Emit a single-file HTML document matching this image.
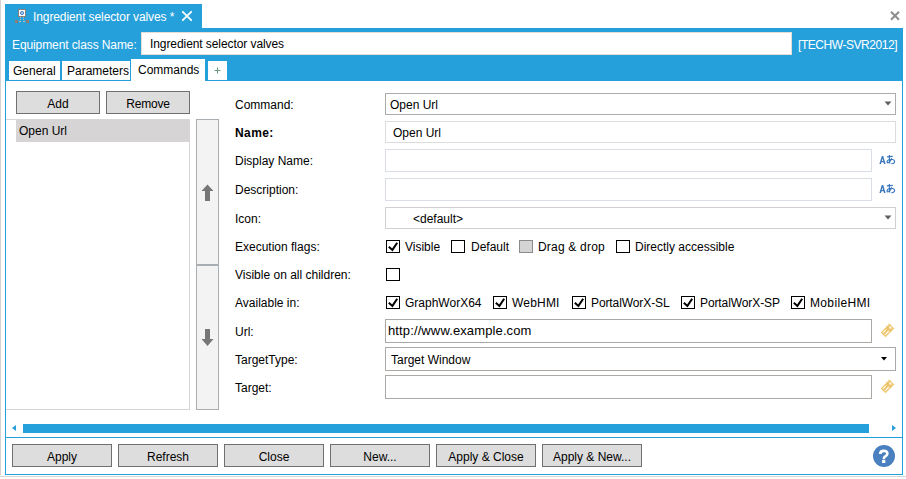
<!DOCTYPE html>
<html><head><meta charset="utf-8">
<style>
*{margin:0;padding:0;box-sizing:border-box}
html,body{width:906px;height:479px;overflow:hidden;background:#fff}
body{position:relative;font-family:"Liberation Sans",sans-serif;font-size:12px;color:#000}
.a{position:absolute}
.t{position:absolute;font-size:12px;line-height:14px;white-space:nowrap}
.blue{background:#26a0da}
.btn{position:absolute;background:#dddddd;border:1px solid #707070;height:23px;text-align:center;line-height:24px}
.cb{position:absolute;width:14px;height:13px;border:1px solid #000;background:#fff}
.cb svg{position:absolute;left:0;top:0}
.box{position:absolute;background:#fff;border:1px solid #d9dde6}
</style></head>
<body>
<!-- left window edge -->
<div class="a" style="left:0;top:476px;width:906px;height:1px;background:#d6d6d6"></div>
<div class="a" style="left:0;top:0;width:1px;height:475px;background:#d2d2d2"></div>

<!-- title tab -->
<div class="a blue" style="left:5px;top:4px;width:197px;height:24px"></div>
<svg class="a" style="left:14px;top:8px" width="16" height="16" viewBox="0 0 16 16">
  <rect x="4.5" y="1.5" width="7" height="7" fill="#fff" stroke="#8a7e7a"/>
  <circle cx="8" cy="5" r="1.6" fill="#a9c3e6" stroke="#4f86c6" stroke-width="1"/>
  <rect x="6" y="9" width="1" height="1" fill="#c9c0b0"/><rect x="9" y="9" width="1" height="1" fill="#c9c0b0"/>
  <rect x="6" y="11" width="1" height="1" fill="#c9c0b0"/><rect x="9" y="11" width="1" height="1" fill="#c9c0b0"/>
  <rect x="1" y="12" width="3" height="3" fill="#8a7e7a"/><rect x="12" y="12" width="3" height="3" fill="#8a7e7a"/>
  <rect x="5" y="13" width="2" height="1" fill="#c9c0b0"/><rect x="9" y="13" width="2" height="1" fill="#c9c0b0"/>
</svg>
<div class="t" style="left:33px;top:10px;color:#fff;letter-spacing:-0.1px">Ingredient selector valves *</div>
<svg class="a" style="left:181px;top:10px" width="12" height="12" viewBox="0 0 12 12"><path d="M1.8 1.8L10.2 10.2M10.2 1.8L1.8 10.2" stroke="#fff" stroke-width="1.8" stroke-linecap="round"/></svg>

<!-- top right close -->
<svg class="a" style="left:889px;top:10px" width="12" height="12" viewBox="0 0 12 12"><path d="M2 1.8L10 9.8M10 1.8L2 9.8" stroke="#8e8e8e" stroke-width="2.1"/></svg>

<!-- header -->
<div class="a blue" style="left:5px;top:28px;width:898px;height:53px"></div>
<div class="t" style="left:12px;top:38px;color:#fff;letter-spacing:-0.1px">Equipment class Name:</div>
<div class="a" style="left:141px;top:32px;width:651px;height:23px;background:#fff;border:1px solid #e3ddd6"></div>
<div class="t" style="left:150px;top:37px;letter-spacing:-0.08px">Ingredient selector valves</div>
<div class="t" style="left:798px;top:38px;color:#fff;letter-spacing:-0.45px">[TECHW-SVR2012]</div>

<!-- tabs -->
<div class="a" style="left:9px;top:61px;width:51px;height:19px;background:#fff"></div>
<div class="t" style="left:13px;top:64px">General</div>
<div class="a" style="left:62px;top:61px;width:68px;height:19px;background:#fff"></div>
<div class="t" style="left:67px;top:64px">Parameters</div>
<div class="a" style="left:131px;top:59px;width:74px;height:22px;background:#fff"></div>
<div class="t" style="left:138px;top:63px">Commands</div>
<div class="a" style="left:208px;top:61px;width:19px;height:19px;background:#fff"></div>
<svg class="a" style="left:214px;top:67px" width="7" height="7" viewBox="0 0 7 7"><path d="M3.5 0.5V6.5M0.5 3.5H6.5" stroke="#6a9c82" stroke-width="1"/></svg>

<!-- content frame -->
<div class="a" style="left:5px;top:81px;width:898px;height:394px;border:1px solid #26a0da;border-top:none"></div>

<!-- left panel -->
<div class="btn" style="left:16px;top:91px;width:84px">Add</div>
<div class="btn" style="left:106px;top:91px;width:84px;letter-spacing:-0.2px">Remove</div>
<div class="a" style="left:6px;top:119px;width:184px;height:291px;border:1px solid #d8d5d5;border-left:none"></div>
<div class="a" style="left:16px;top:120px;width:174px;height:22px;background:#d6d4d4"></div>
<div class="t" style="left:19px;top:124px">Open Url</div>

<div class="a" style="left:196px;top:119px;width:23px;height:146px;background:#f3f3f3;border:1px solid #a8aeb2"></div>
<div class="a" style="left:196px;top:265px;width:23px;height:145px;background:#f3f3f3;border:1px solid #a8aeb2"></div>
<svg class="a" style="left:196px;top:119px" width="23" height="291">
  <path d="M207.5 184.5L213.5 191H210V201H205V191H201.5Z" transform="translate(-196,-119)" fill="#767676"/>
  <path d="M205 329H210V339H213.5L207.5 346L201.5 339H205Z" transform="translate(-196,-119)" fill="#767676"/>
</svg>

<!-- form labels -->
<div class="t" style="left:235px;top:98px">Command:</div>
<div class="t" style="left:235px;top:126px;font-weight:bold;letter-spacing:0.4px">Name:</div>
<div class="t" style="left:235px;top:154px">Display Name:</div>
<div class="t" style="left:235px;top:183px">Description:</div>
<div class="t" style="left:235px;top:212px">Icon:</div>
<div class="t" style="left:235px;top:240px">Execution flags:</div>
<div class="t" style="left:235px;top:268px">Visible on all children:</div>
<div class="t" style="left:235px;top:296px">Available in:</div>
<div class="t" style="left:235px;top:325px">Url:</div>
<div class="t" style="left:235px;top:353px">TargetType:</div>
<div class="t" style="left:235px;top:381px">Target:</div>

<!-- fields -->
<div class="box" style="left:385px;top:93px;width:511px;height:22px;border-color:#acacac"></div>
<div class="t" style="left:390px;top:98px">Open Url</div>
<svg class="a" style="left:884px;top:101px" width="8" height="5"><path d="M0.5 0.5H7.5L4 4.5Z" fill="#606060"/></svg>

<div class="box" style="left:385px;top:121px;width:511px;height:22px;border-color:#dcdcdc"></div>
<div class="t" style="left:393px;top:126px">Open Url</div>

<div class="box" style="left:385px;top:149px;width:487px;height:23px"></div>
<svg class="a" style="left:876px;top:152px" width="22" height="16" viewBox="0 0 22 16"><g fill="none" stroke="#3c78be" stroke-linecap="butt">
<path d="M3.4 11.9L5.8 3.9H7.2L9.6 11.9H8L5.5 11.9H5Z" fill="#3c78be" stroke="none"/><path d="M5 11.9L6.5 6.4L8 11.9" fill="#fff" stroke="none"/><path d="M4.8 9.6H8.2" stroke-width="1.2"/>
<path d="M11 4.9L16.8 4.3" stroke-width="1.2"/><path d="M13.4 3C13.3 6 13.3 9 13.7 11.5" stroke-width="1.2"/>
<path d="M15.8 6.3C15 8.5 13 11 11.6 10.8C10.6 10.6 10.8 8.6 13 7.8C15.5 7 18.2 7.3 18.6 9.2C18.9 10.6 17.4 11.6 15.4 11.7" stroke-width="1.2"/>
</g></svg>
<div class="box" style="left:385px;top:178px;width:487px;height:23px"></div>
<svg class="a" style="left:876px;top:181px" width="22" height="16" viewBox="0 0 22 16"><g fill="none" stroke="#3c78be" stroke-linecap="butt">
<path d="M3.4 11.9L5.8 3.9H7.2L9.6 11.9H8L5.5 11.9H5Z" fill="#3c78be" stroke="none"/><path d="M5 11.9L6.5 6.4L8 11.9" fill="#fff" stroke="none"/><path d="M4.8 9.6H8.2" stroke-width="1.2"/>
<path d="M11 4.9L16.8 4.3" stroke-width="1.2"/><path d="M13.4 3C13.3 6 13.3 9 13.7 11.5" stroke-width="1.2"/>
<path d="M15.8 6.3C15 8.5 13 11 11.6 10.8C10.6 10.6 10.8 8.6 13 7.8C15.5 7 18.2 7.3 18.6 9.2C18.9 10.6 17.4 11.6 15.4 11.7" stroke-width="1.2"/>
</g></svg>

<div class="box" style="left:385px;top:207px;width:511px;height:22px;border-color:#d0d0d0"></div>
<div class="t" style="left:413px;top:212px">&lt;default&gt;</div>
<svg class="a" style="left:884px;top:215px" width="8" height="5"><path d="M0.5 0.5H7.5L4 4.5Z" fill="#606060"/></svg>

<!-- execution flags -->
<div class="cb" style="left:386px;top:240px"><svg width="12" height="11"><path d="M1.8 5.8L5.4 8.9L10.2 1.8" fill="none" stroke="#000" stroke-width="2"/></svg></div>
<div class="t" style="left:405px;top:240px">Visible</div>
<div class="cb" style="left:451px;top:240px"></div>
<div class="t" style="left:471px;top:240px">Default</div>
<div class="cb" style="left:519px;top:240px;background:#d4d4d4;border-color:#8a8a8a"></div>
<div class="t" style="left:538px;top:240px;letter-spacing:0.2px">Drag &amp; drop</div>
<div class="cb" style="left:616px;top:240px"></div>
<div class="t" style="left:635px;top:240px">Directly accessible</div>

<div class="cb" style="left:386px;top:268px"></div>

<!-- available in -->
<div class="cb" style="left:386px;top:296px"><svg width="12" height="11"><path d="M1.8 5.8L5.4 8.9L10.2 1.8" fill="none" stroke="#000" stroke-width="2"/></svg></div>
<div class="t" style="left:405px;top:296px">GraphWorX64</div>
<div class="cb" style="left:493px;top:296px"><svg width="12" height="11"><path d="M1.8 5.8L5.4 8.9L10.2 1.8" fill="none" stroke="#000" stroke-width="2"/></svg></div>
<div class="t" style="left:512px;top:296px;letter-spacing:0.2px">WebHMI</div>
<div class="cb" style="left:572px;top:296px"><svg width="12" height="11"><path d="M1.8 5.8L5.4 8.9L10.2 1.8" fill="none" stroke="#000" stroke-width="2"/></svg></div>
<div class="t" style="left:591px;top:296px;letter-spacing:-0.1px">PortalWorX-SL</div>
<div class="cb" style="left:681px;top:296px"><svg width="12" height="11"><path d="M1.8 5.8L5.4 8.9L10.2 1.8" fill="none" stroke="#000" stroke-width="2"/></svg></div>
<div class="t" style="left:700px;top:296px;letter-spacing:-0.1px">PortalWorX-SP</div>
<div class="cb" style="left:791px;top:296px"><svg width="12" height="11"><path d="M1.8 5.8L5.4 8.9L10.2 1.8" fill="none" stroke="#000" stroke-width="2"/></svg></div>
<div class="t" style="left:810px;top:296px;letter-spacing:0.35px">MobileHMI</div>

<!-- url / target -->
<div class="box" style="left:385px;top:319px;width:487px;height:24px;border-color:#aba8a6"></div>
<div class="t" style="left:388px;top:324px;font-size:13px;letter-spacing:0.12px">http://www.example.com</div>
<div class="box" style="left:385px;top:347px;width:511px;height:24px;border-color:#aba8a6"></div>
<div class="t" style="left:391px;top:353px">Target Window</div>
<svg class="a" style="left:881px;top:357px" width="6" height="4"><path d="M0 0H6L3 3.5Z" fill="#000"/></svg>
<div class="box" style="left:385px;top:375px;width:487px;height:24px;border-color:#aba8a6"></div>

<!-- tag icons -->
<svg class="a" style="left:878px;top:320px" width="20" height="20" viewBox="0 0 20 20"><g transform="translate(9.5 10.4) rotate(-45)">
<rect x="-6.2" y="-3.4" width="12.4" height="6.8" fill="#efc872"/>
<path d="M-4.8 -1.5H-0.9M-4.8 1.4H0.6" stroke="#fff" stroke-width="1"/>
<path d="M2.2 -3.4V3.4" stroke="#dcae58" stroke-width="0.5"/>
<path d="M4.1 -1.9L4.7 -0.6L6 0L4.7 0.6L4.1 1.9L3.5 0.6L2.2 0L3.5 -0.6Z" fill="#fff"/>
</g></svg>
<svg class="a" style="left:878px;top:376px" width="20" height="20" viewBox="0 0 20 20"><g transform="translate(9.5 10.4) rotate(-45)">
<rect x="-6.2" y="-3.4" width="12.4" height="6.8" fill="#efc872"/>
<path d="M-4.8 -1.5H-0.9M-4.8 1.4H0.6" stroke="#fff" stroke-width="1"/>
<path d="M2.2 -3.4V3.4" stroke="#dcae58" stroke-width="0.5"/>
<path d="M4.1 -1.9L4.7 -0.6L6 0L4.7 0.6L4.1 1.9L3.5 0.6L2.2 0L3.5 -0.6Z" fill="#fff"/>
</g></svg>
<!-- horizontal scrollbar -->
<svg class="a" style="left:11px;top:424px" width="6" height="8"><path d="M1 4L5 1V7Z" fill="#26a0da"/></svg>
<div class="a blue" style="left:23px;top:424px;width:846px;height:9px"></div>
<svg class="a" style="left:891px;top:424px" width="6" height="8"><path d="M5 4L1 1V7Z" fill="#26a0da"/></svg>
<div class="a blue" style="left:5px;top:437px;width:898px;height:1px"></div>

<!-- bottom buttons -->
<div class="btn" style="left:12px;top:444px;width:100px">Apply</div>
<div class="btn" style="left:118px;top:444px;width:100px">Refresh</div>
<div class="btn" style="left:224px;top:444px;width:100px">Close</div>
<div class="btn" style="left:330px;top:444px;width:100px">New...</div>
<div class="btn" style="left:436px;top:444px;width:100px">Apply &amp; Close</div>
<div class="btn" style="left:542px;top:444px;width:100px">Apply &amp; New...</div>

<!-- help -->
<svg class="a" style="left:873px;top:445px" width="22" height="22" viewBox="0 0 22 22">
  <circle cx="11" cy="11" r="11" fill="#4a80bf"/>
  <path d="M7.2 8.9C7.2 6.6 8.8 5.9 10.9 5.9C13 5.9 14.4 7 14.4 8.6C14.4 10.6 12.8 10.8 11.7 11.8C11 12.4 10.8 13 10.8 14.3" fill="none" stroke="#fff" stroke-width="2.6"/>
  <rect x="9.1" y="15" width="3.2" height="3" fill="#fff"/>
</svg>
</body></html>
